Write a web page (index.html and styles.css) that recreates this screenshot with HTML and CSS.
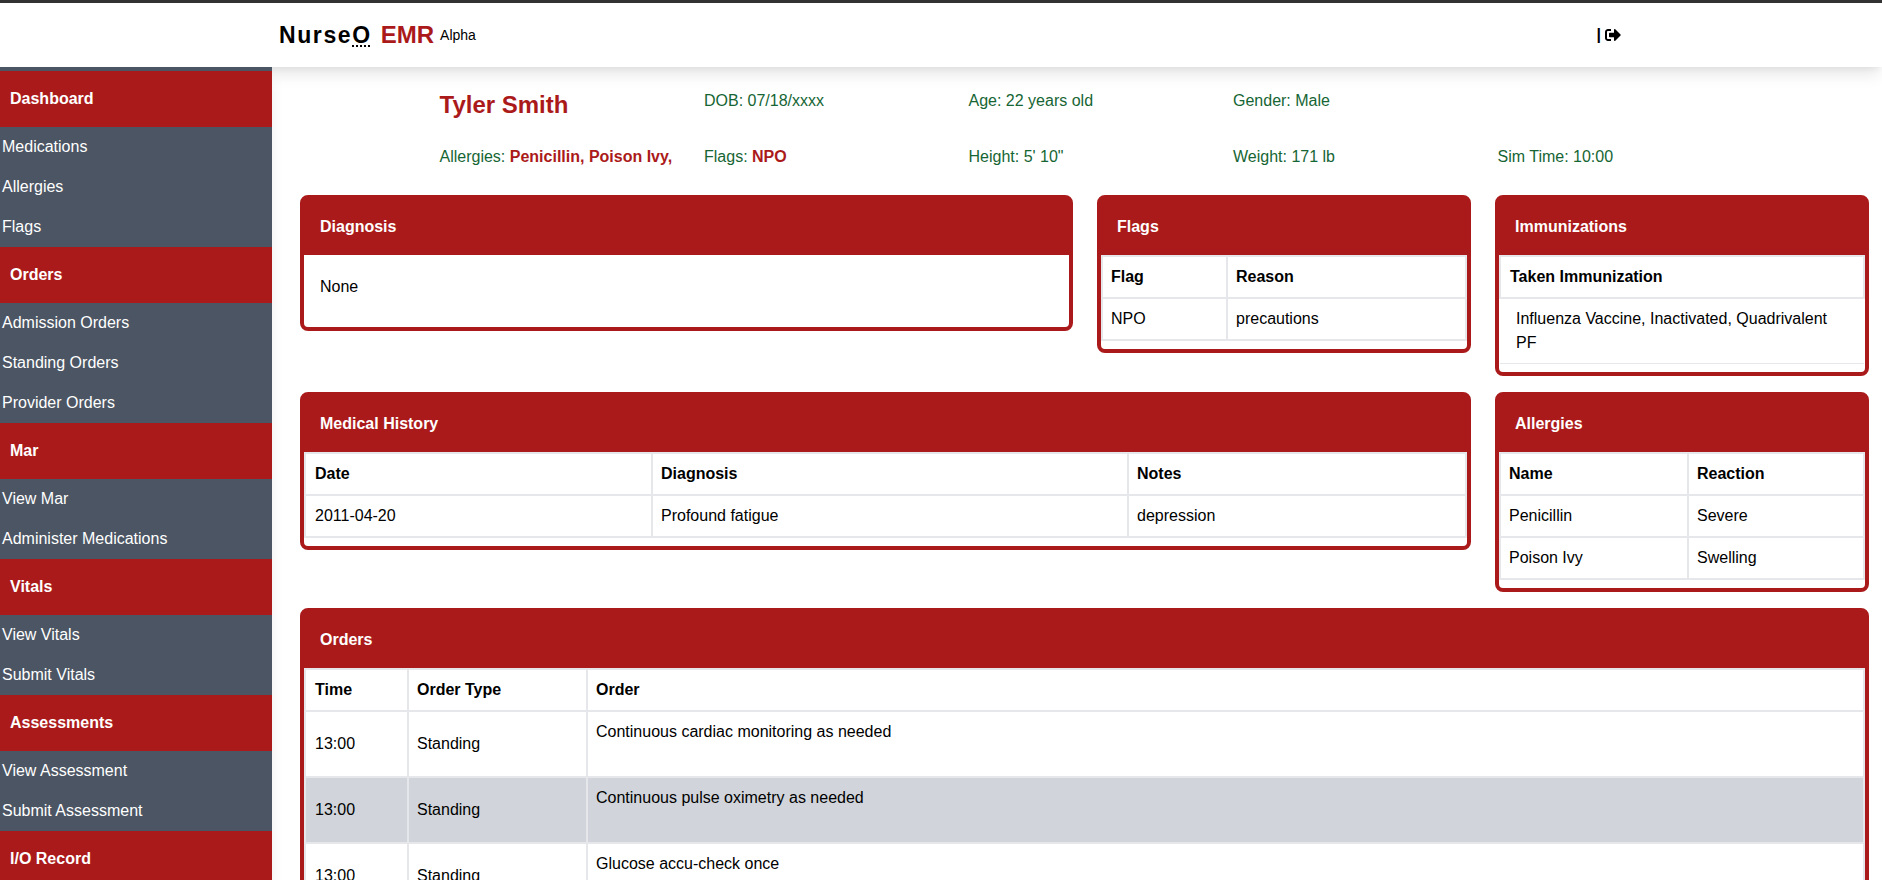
FILE: index.html
```html
<!DOCTYPE html>
<html>
	<head>
		<meta charset="UTF-8">
		<title>NurseO EMR</title>
		<link rel="stylesheet" href="styles.css">
	</head>
	<body>
		<header class="topbar">
			<div class="logo">
				<span class="logo-name">Nurse<span class="logo-o">O</span></span>
				<span class="logo-emr">EMR</span>
				<span class="logo-tag">Alpha</span>
			</div>
			<div class="topbar-right">
				<span class="pipe">|</span>
				<svg class="signout" viewBox="0 0 512 512"><path d="M497 273L329 441c-15 15-41 4.500-41-17v-96H152c-13.300 0-24-10.700-24-24v-96c0-13.300 10.700-24 24-24h136V88c0-21.400 25.900-32 41-17l168 168c9.300 9.400 9.300 24.600 0 34zM192 436v-40c0-6.600-5.400-12-12-12H96c-17.700 0-32-14.300-32-32V160c0-17.700 14.300-32 32-32h84c6.600 0 12-5.400 12-12V76c0-6.600-5.400-12-12-12H96c-53 0-96 43-96 96v192c0 53 43 96 96 96h84c6.600 0 12-5.400 12-12z"/></svg>
			</div>
		</header>
		<div class="shell">
			<nav class="sidebar">
				<div class="nav-head">Dashboard</div>
				<a class="nav-item">Medications</a>
				<a class="nav-item">Allergies</a>
				<a class="nav-item">Flags</a>
				<div class="nav-head">Orders</div>
				<a class="nav-item">Admission Orders</a>
				<a class="nav-item">Standing Orders</a>
				<a class="nav-item">Provider Orders</a>
				<div class="nav-head">Mar</div>
				<a class="nav-item">View Mar</a>
				<a class="nav-item">Administer Medications</a>
				<div class="nav-head">Vitals</div>
				<a class="nav-item">View Vitals</a>
				<a class="nav-item">Submit Vitals</a>
				<div class="nav-head">Assessments</div>
				<a class="nav-item">View Assessment</a>
				<a class="nav-item">Submit Assessment</a>
				<div class="nav-head">I/O Record</div>
			</nav>
			<main class="content">
				<section class="patient">
					<h1 class="patient-name">Tyler Smith</h1>
					<div>DOB: 07/18/xxxx</div>
					<div>Age: 22 years old</div>
					<div>Gender: Male</div>
					<div></div>
					<div>Allergies: <b>Penicillin, Poison Ivy,</b></div>
					<div>Flags: <b>NPO</b></div>
					<div>Height: 5' 10"</div>
					<div>Weight: 171 lb</div>
					<div>Sim Time: 10:00</div>
				</section>

				<section class="cards">
					<div class="card">
						<div class="card-title">Diagnosis</div>
						<div class="card-body"><p class="none">None</p></div>
					</div>

					<div class="card">
						<div class="card-title">Flags</div>
						<div class="card-body">
							<table>
								<colgroup><col class="c-flag"><col></colgroup>
								<tr><th>Flag</th><th>Reason</th></tr>
								<tr><td>NPO</td><td>precautions</td></tr>
							</table>
						</div>
					</div>

					<div class="card">
						<div class="card-title">Immunizations</div>
						<div class="card-body">
							<table class="imm">
								<tr><th>Taken Immunization</th></tr>
								<tr><td>Influenza Vaccine, Inactivated, Quadrivalent PF</td></tr>
							</table>
						</div>
					</div>

					<div class="card span-2">
						<div class="card-title">Medical History</div>
						<div class="card-body">
							<table class="wide">
								<colgroup><col class="c-date"><col class="c-diag"><col></colgroup>
								<tr><th>Date</th><th>Diagnosis</th><th>Notes</th></tr>
								<tr><td>2011-04-20</td><td>Profound fatigue</td><td>depression</td></tr>
							</table>
						</div>
					</div>

					<div class="card">
						<div class="card-title">Allergies</div>
						<div class="card-body">
							<table>
								<colgroup><col class="c-name"><col></colgroup>
								<tr><th>Name</th><th>Reaction</th></tr>
								<tr><td>Penicillin</td><td>Severe</td></tr>
								<tr><td>Poison Ivy</td><td>Swelling</td></tr>
							</table>
						</div>
					</div>

					<div class="card span-3">
						<div class="card-title">Orders</div>
						<div class="card-body">
							<table class="wide orders">
								<colgroup><col class="c-time"><col class="c-type"><col></colgroup>
								<tr><th>Time</th><th>Order Type</th><th>Order</th></tr>
								<tr><td>13:00</td><td>Standing</td><td class="order-text">Continuous cardiac monitoring as needed</td></tr>
								<tr class="odd"><td>13:00</td><td>Standing</td><td class="order-text">Continuous pulse oximetry as needed</td></tr>
								<tr><td>13:00</td><td>Standing</td><td class="order-text">Glucose accu-check once</td></tr>
							</table>
						</div>
					</div>
				</section>
			</main>
		</div>
	</body>
</html>
```

FILE: styles.css
```css
* {
	box-sizing: border-box;
}

html,
body {
	height: 100%;
}

body {
	margin: 0;
	padding: 0;
	overflow: hidden;
	display: flex;
	flex-direction: column;
	font-family: "Liberation Sans", Arial, sans-serif;
	font-size: 16px;
	line-height: 24px;
	color: #000;
	background: #fff;
}

/* top bar */
.topbar {
	position: relative;
	z-index: 1;
	flex: none;
	height: 67px;
	display: flex;
	align-items: center;
	padding: 0 261px 0 279px;
	border-top: 3px solid #333;
	background: #fff;
	box-shadow: 0 10px 15px -3px rgba(0, 0, 0, .1), 0 4px 6px -2px rgba(0, 0, 0, .05);
}

.logo {
	display: flex;
	align-items: center;
}

.logo-name {
	font-size: 23px;
	font-weight: bold;
	letter-spacing: 1.6px;
}

.logo-o {
	position: relative;
	display: inline-block;
}

/* the row of dots under the O */
.logo-o::after {
	content: "";
	position: absolute;
	left: 0;
	top: 22px;
	width: 18px;
	height: 2px;
	background: repeating-linear-gradient(90deg, #000 0 2px, transparent 2px 4px);
}

.logo-emr {
	margin-left: 9px;
	font-size: 24px;
	font-weight: bold;
	color: #ab1a1a;
}

.logo-tag {
	margin-left: 6px;
	font-size: 14px;
}

.topbar-right {
	margin-left: auto;
	display: flex;
	align-items: center;
	gap: 4px;
}

.pipe {
	font-weight: bold;
}

.signout {
	width: 16px;
	height: 16px;
	display: block;
}

/* sidebar + content */
.shell {
	flex: 1;
	display: flex;
	min-height: 0;
}

.sidebar {
	position: relative;
	z-index: 2;
	flex: none;
	width: 272px;
	padding-top: 4px;
	overflow: hidden;
	background: #4b5563;
	color: #fff;
	box-shadow: 0 10px 15px -3px rgba(0, 0, 0, .1);
}

.nav-head {
	height: 56px;
	line-height: 55px;
	padding-left: 10px;
	font-weight: bold;
	background: #ab1a1a;
}

.nav-item {
	display: block;
	height: 40px;
	line-height: 40px;
	padding-left: 2px;
}

.content {
	flex: 1;
	min-width: 0;
	overflow: hidden;
	padding: 22px 13px 0 28px;
}

.patient {
	display: grid;
	grid-template-columns: repeat(5, 264.5px);
	row-gap: 26px;
	padding-left: 139.5px;
	margin-bottom: 26px;
	color: #166534;
}

.patient b {
	color: #ab1a1a;
}

.patient-name {
	margin: 2px 0 0;
	font-size: 24px;
	line-height: 28px;
	color: #ab1a1a;
}

.cards {
	display: grid;
	grid-template-columns: 773px 374px 374px;
	column-gap: 24px;
	row-gap: 16px;
	align-items: start;
}

.span-2 {
	grid-column: span 2;
}

.span-3 {
	grid-column: span 3;
}

.card {
	border: 4px solid #ab1a1a;
	border-radius: 8px;
	background: #fff;
}

.card-title {
	height: 56px;
	line-height: 55px;
	padding-left: 16px;
	font-weight: bold;
	color: #fff;
	background: #ab1a1a;
}

.card-body {
	padding-bottom: 8px;
}

.none {
	margin: 0;
	padding: 20px 16px;
}

table {
	width: 100%;
	table-layout: fixed;
	border-collapse: collapse;
}

th,
td {
	padding: 8px;
	border: 2px solid #e5e7eb;
	text-align: left;
}

.wide th:first-child,
.wide td:first-child,
.imm th {
	padding-left: 9px;
}

.imm td {
	padding: 8px 16px;
	border-width: 0 0 1px;
}

.c-flag { width: 125px; }
.c-date { width: 347px; }
.c-diag { width: 476px; }
.c-name { width: 188px; }
.c-time { width: 103px; }
.c-type { width: 179px; }

.orders td {
	height: 66px;
}

.orders .order-text {
	vertical-align: top;
}

.odd td {
	background: #d1d5db;
}
```
